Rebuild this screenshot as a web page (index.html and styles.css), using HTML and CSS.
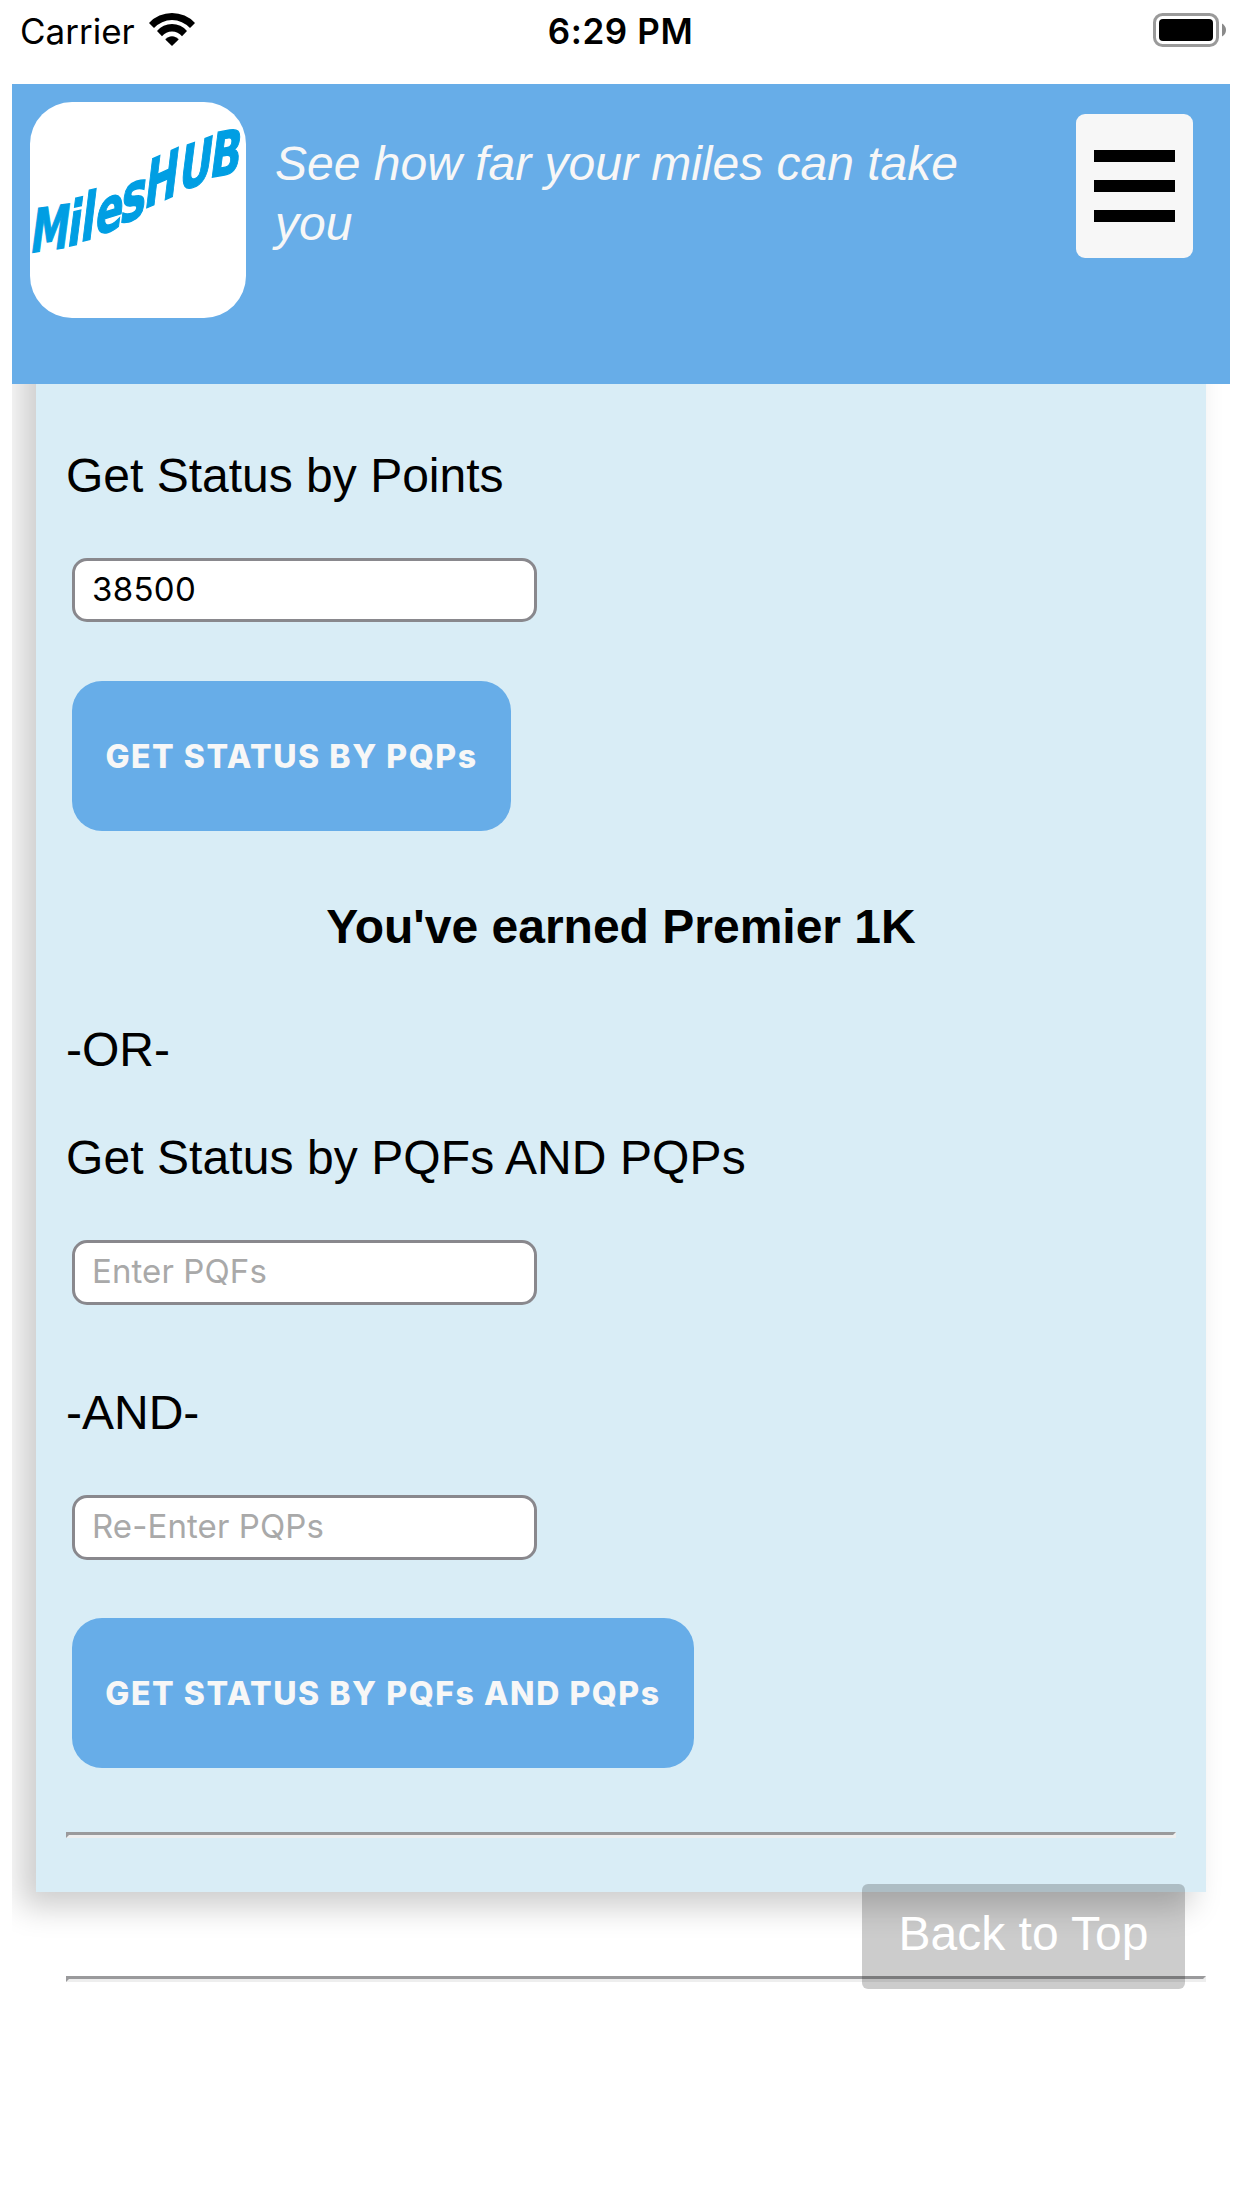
FILE: index.html
```html
<!DOCTYPE html>
<html lang="en">
<head>
<meta charset="utf-8">
<title>MilesHUB</title>
<link rel="stylesheet" href="styles.css">
</head>
<body>
<div class="status-bar">
  <div class="status-left">
    <span class="carrier">Carrier</span>
    <svg class="wifi" viewBox="0 0 46 33" width="46" height="33">
      <path d="M0 10A31.5 31.5 0 0 1 46 10L41 15A24.5 24.5 0 0 0 5 15Z"/>
      <path d="M8 18A19.5 19.5 0 0 1 38 18L33 23.2A13 13 0 0 0 13 23.2Z"/>
      <path d="M16.3 26.6A8.5 8.5 0 0 1 29.7 26.6L23 33Z"/>
    </svg>
  </div>
  <span class="time">6:29 PM</span>
  <div class="status-right">
    <svg width="73" height="34" viewBox="0 0 73 34">
      <rect x="1.5" y="1.5" width="63" height="31" rx="8" fill="none" stroke="#9a9a9a" stroke-width="3"/>
      <rect x="6" y="6" width="54" height="22" rx="4"/>
      <path d="M69 10.5Q73 13 73 17T69 23.5Z" fill="#8a8a8a"/>
    </svg>
  </div>
</div>
<div class="page">
  <header class="header">
    <svg class="logo" viewBox="30 102 216 216" width="216" height="216">
      <g class="logo-text">
        <text transform="matrix(.62 -.09 -.13 .98 29 253)">M</text>
        <text transform="matrix(.66 -.15 -.13 1.020 66 247)">i</text>
        <text transform="matrix(.66 -.16 -.13 1.080 79.500 242)">l</text>
        <text transform="matrix(.65 -.2 -.13 1.040 94 236)">e</text>
        <text transform="matrix(.69 -.24 -.13 1.120 119 224.500)">s</text>
        <text transform="matrix(.64 -.28 -.13 1.090 143 209.500)">H</text>
        <text transform="matrix(.65 -.24 -.13 1.020 177.500 192.500)">U</text>
        <text transform="matrix(.65 -.12 -.13 1 208.500 178)">B</text>
      </g>
    </svg>
    <p class="tagline">See how far your miles can take you</p>
    <button class="menu" aria-label="Menu"><span></span><span></span><span></span></button>
  </header>
  <main class="main">
    <form class="panel">
      <p class="label">Get Status by Points</p>
      <input class="field" type="text" value="38500">
      <button class="submit" type="button">GET STATUS BY PQPs</button>
      <p class="result">You've earned Premier 1K</p>
      <p class="label">-OR-</p>
      <p class="label second">Get Status by PQFs AND PQPs</p>
      <input class="field tall" type="text" placeholder="Enter PQFs">
      <p class="label and">-AND-</p>
      <input class="field tall" type="text" placeholder="Re-Enter PQPs">
      <button class="submit wide" type="button">GET STATUS BY PQFs AND PQPs</button>
      <hr class="rule">
    </form>
    <hr class="rule footer-rule">
  </main>
</div>
<a class="back-to-top">Back to Top</a>
</body>
</html>
```
FILE: styles.css
```css
* { box-sizing: border-box; }
body {
  margin: 0;
  height: 2208px;
  overflow: hidden;
  background: #fff;
  color: #000;
  font: 48px/56px "Liberation Sans", Arial, sans-serif;
}
p { margin: 0; }

.status-bar {
  height: 84px;
  padding: 0 16px 0 20px;
  display: grid;
  grid-template-columns: 1fr auto 1fr;
  align-items: start;
  font: 35px/44px Inter, sans-serif;
}
.status-left { display: flex; gap: 13px; padding-top: 9px; }
.carrier { width: 116px; white-space: nowrap; }
.wifi { margin-top: 4px; }
.time { margin-left: -5px; padding-top: 9px; font-weight: 600; letter-spacing: .6px; }
.status-right { display: flex; justify-content: flex-end; padding-top: 13px; }

.page { margin: 0 12px; overflow: hidden; }
.header {
  position: relative;
  z-index: 1;
  height: 300px;
  padding: 18px 37px 0 18px;
  display: flex;
  align-items: flex-start;
  background: #67ade8;
}
.logo { flex: none; border-radius: 42px; background: #fff; overflow: visible; }
.logo-text { font: 700 62px "DejaVu Sans", sans-serif; fill: #009ee3; stroke: #009ee3; stroke-width: 1.4; }
.tagline {
  flex: 1;
  margin: 32px 99px 0 29px;
  color: #f7f7f7;
  font-style: italic;
  line-height: 60px;
}
.menu {
  width: 117px;
  height: 144px;
  margin-top: 12px;
  padding: 0 18px;
  border: 0;
  border-radius: 9px;
  background: #f7f7f7;
  display: flex;
  flex-direction: column;
  justify-content: center;
  gap: 18px;
}
.menu span { height: 12px; background: #000; }

.main { padding: 0 24px 220px; }
/* The top edge is tucked under the header so its shadow runs on behind it */
.panel {
  height: 1568px;
  margin-top: -60px;
  padding: 124px 30px 0;
  background: #d9edf6;
  box-shadow: -15px 15px 30px rgba(0, 0, 0, .2);
}
.field {
  display: block;
  width: 465px;
  height: 64px;
  margin: 54px 0 59px 6px;
  padding: 0 17px 3px;
  border: 3px solid #89888d;
  border-radius: 15px;
  background: #fff;
  color: #000;
  font: 33px Inter, sans-serif;
  letter-spacing: .3px;
}
.field.tall { height: 65px; margin-bottom: 58px; letter-spacing: .1px; }
.field::placeholder { color: #a9a9a9; opacity: 1; }
.submit {
  display: block;
  width: 439px;
  height: 150px;
  margin-left: 6px;
  padding: 0;
  border: 0;
  border-radius: 30px;
  background: #67ade8;
  color: #f7f7f7;
  font: 800 32px Inter, sans-serif;
  letter-spacing: 1.55px;
  white-space: nowrap;
}
.submit.wide { width: 622px; }
.result { margin: 68px 0 67px; text-align: center; font-weight: 700; }
.second { margin-top: 52px; letter-spacing: .08px; }
.and { margin-top: 80px; }
.rule {
  height: 6px;
  margin: 64px 0 0;
  border: 3px solid;
  border-color: #9a9a9c #eee #eee #9a9a9c;
}
.footer-rule { margin: 84px 0 0 30px; }

/* Floats above the end of the page */
.back-to-top {
  position: absolute;
  z-index: 2;
  left: 862px;
  top: 1884px;
  width: 323px;
  height: 105px;
  border-radius: 6px;
  background: rgba(0, 0, 0, .2);
  color: #fff;
  text-align: center;
  line-height: 99px;
}
```
